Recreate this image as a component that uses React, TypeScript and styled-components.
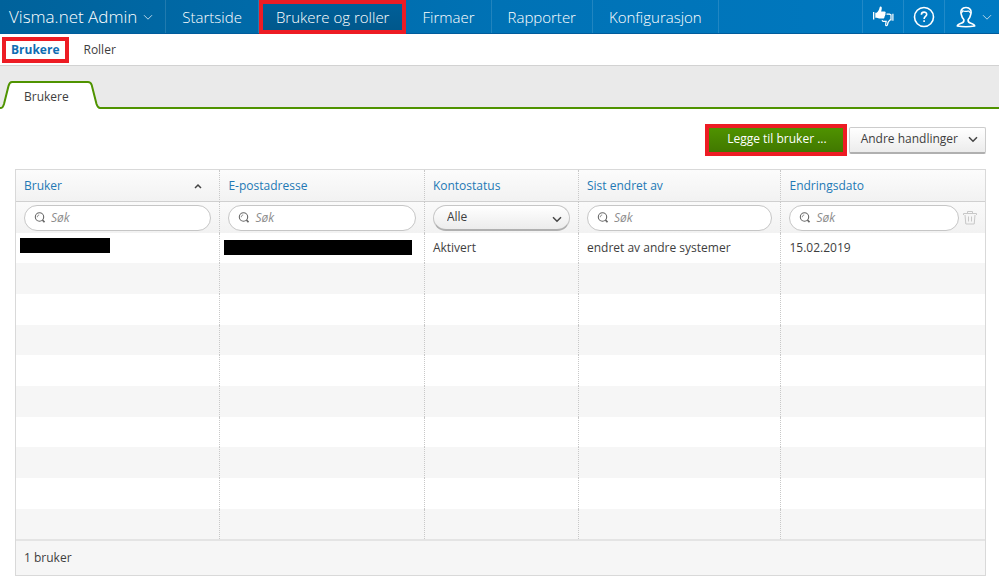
import React, { useState } from 'react';
import styled, { createGlobalStyle, css } from 'styled-components';

const GlobalStyle = createGlobalStyle`
  *, *::before, *::after { box-sizing: border-box; }
  body {
    margin: 0;
    background: #fff;
    color: #3e3e3e;
    font-family: 'Open Sans', 'Noto Sans', sans-serif;
    font-size: 12px;
    line-height: 18px;
  }
  button, input, select { font: inherit; color: inherit; }
`;

const HIGHLIGHT = '#ed1c24';

const TopBar = styled.header`
  display: flex;
  height: 34px;
  background: linear-gradient(to right, #00629b, #0072b5 50%, #007ac2);
  border-bottom: 1px solid #005c9c;
  color: #fff;
`;

const topItem = css`
  display: flex;
  align-items: center;
  height: 33px;
  border: 0;
  border-right: 1px solid rgba(255, 255, 255, 0.13);
  background: none;
  color: #fff;
  cursor: pointer;
`;

const Brand = styled.button`
  ${topItem}
  gap: 6px;
  padding: 0 12px 0 9px;
  font-size: 17px;
  font-weight: 300;
`;

const MainNav = styled.nav`
  display: flex;
  flex: 1;
`;

const NavLink = styled.a<{ $active?: boolean }>`
  ${topItem}
  padding: 0 16px;
  font-size: 15px;
  text-decoration: none;
  font-weight: 300;
  ${({ $active }) =>
    $active &&
    css`
      height: 34px;
      padding: 0 13px;
      background: linear-gradient(#005f99, #00588c);
      border: 4px solid ${HIGHLIGHT};
    `}
`;

const Tools = styled.div`
  display: flex;
`;

const ToolButton = styled.button<{ $menu?: boolean }>`
  ${topItem}
  gap: 6px;
  padding: ${({ $menu }) => ($menu ? '0 7px 0 11px' : '0 9px')};
  border-right: 0;
  border-left: 1px solid rgba(255, 255, 255, 0.13);
`;

const SubNav = styled.nav`
  display: flex;
  align-items: center;
  gap: 14px;
  height: 32px;
  padding: 0 2px;
  border-bottom: 1px solid #d2d2d2;
`;

const SubLink = styled.a<{ $active?: boolean }>`
  color: #3e3e3e;
  text-decoration: none;
  ${({ $active }) =>
    $active &&
    css`
      padding: 0 6px 0 5px;
      border: 4px solid ${HIGHLIGHT};
      color: #0f6db3;
      font-weight: 700;
    `}
`;

const TabStrip = styled.div`
  display: flex;
  align-items: flex-end;
  height: 43px;
  background: linear-gradient(#4f9300, #4f9300) bottom / 100% 2px no-repeat #eaeaea;
`;

const Tab = styled.button`
  display: grid;
  width: 100px;
  height: 28px;
  padding: 0;
  border: 0;
  background: none;
  cursor: pointer;
`;

const TabShape = styled.svg`
  grid-area: 1 / 1;
`;

const TabLabel = styled.span`
  grid-area: 1 / 1;
  padding: 7px 0 0 24px;
  text-align: left;
`;

const Content = styled.main`
  padding: 15px 13px 12px 15px;
`;

const Actions = styled.div`
  display: flex;
  align-items: center;
  justify-content: flex-end;
  gap: 2px;
  margin-bottom: 13px;
`;

const PrimaryButton = styled.button`
  height: 32px;
  padding: 0 16px 2px 18px;
  border: 4px solid ${HIGHLIGHT};
  background: linear-gradient(#4f9200, #417800);
  color: #fff;
  cursor: pointer;
`;

const MenuButton = styled.button`
  display: flex;
  align-items: center;
  gap: 10px;
  height: 27px;
  padding: 0 7px 1px 11px;
  border: 1px solid #ccc;
  border-bottom: 2px solid #b0b0b0;
  border-radius: 2px;
  background: linear-gradient(#fff, #ececec);
  cursor: pointer;
`;

const Panel = styled.section`
  border: 1px solid #d9d9d9;
`;

const Table = styled.table`
  width: 100%;
  table-layout: fixed;
  border-collapse: separate;
  border-spacing: 0;
  text-align: left;
`;

const Col = styled.col<{ $share: number }>`
  width: ${({ $share }) => $share}%;
`;

const divider = css`
  &:not(:last-child) { border-right: 1px dotted #c8c8c8; }
`;

const HeadCell = styled.th`
  ${divider}
  height: 32px;
  padding: 0 8px;
  border-bottom: 1px solid #d0d0d0;
  background: linear-gradient(#fcfcfc, #f2f2f2);
  color: #2379b5;
  font-weight: 400;
`;

const HeadContent = styled.div`
  display: flex;
  align-items: center;
  justify-content: space-between;
  padding-right: 8px;
`;

const FilterCell = styled.td`
  ${divider}
  height: 31px;
  padding: 0 8px;
  background: linear-gradient(#fafafa, #f2f2f2);
`;

const FilterLine = styled.div`
  display: flex;
  align-items: center;
  gap: 4px;
`;

const SearchBox = styled.label`
  display: flex;
  flex: 1;
  align-items: center;
  gap: 5px;
  min-width: 0;
  height: 26px;
  padding: 0 10px 0 9px;
  border: 1px solid #c6c6c6;
  border-radius: 13px;
  background: #fff;
`;

const SearchInput = styled.input`
  flex: 1;
  min-width: 0;
  padding: 0;
  border: 0;
  outline: 0;
  background: none;
  &::placeholder { color: #8c8c8c; font-style: italic; opacity: 1; }
`;

const SelectBox = styled.div`
  display: grid;
  flex: 1;
  align-items: center;
`;

const StatusSelect = styled.select`
  grid-area: 1 / 1;
  width: 100%;
  height: 26px;
  padding: 0 28px 1px 13px;
  appearance: none;
  border: 1px solid #c6c6c6;
  border-bottom: 2px solid #b0b0b0;
  border-radius: 13px;
  background: linear-gradient(#fff, #ececec);
`;

const SelectArrow = styled.span`
  display: flex;
  grid-area: 1 / 1;
  justify-self: end;
  padding: 2px 8px 0 0;
  pointer-events: none;
`;

const DeleteButton = styled.button`
  display: flex;
  padding: 0;
  border: 0;
  background: none;
  cursor: pointer;
`;

const Row = styled.tr`
  height: 31px;
  &:nth-child(3n + 1) { height: 30px; }
  &:nth-child(even) { background: #f6f6f6; }
`;

const Cell = styled.td<{ $tight?: boolean }>`
  ${divider}
  padding: 0 ${({ $tight }) => ($tight ? 4 : 8)}px;
`;

const Redacted = styled.div<{ $share: number; $low?: boolean }>`
  width: ${({ $share }) => $share}%;
  height: 15px;
  margin-bottom: ${({ $low }) => ($low ? 2 : 6)}px;
  background: #000;
`;

const Footer = styled.footer`
  padding: 8px;
  border-top: 2px solid #e4e4e4;
  background: #f6f6f6;
`;

const Chevron = ({ color = '#444', up = false, size = 10, weight = 1.5 }) => (
  <svg width={size} height={size} viewBox="0 0 10 10" fill="none" stroke={color} strokeWidth={weight} aria-hidden="true">
    <path d={up ? 'M2 7l3-3 3 3' : 'M1 3.2l4 4 4-4'} />
  </svg>
);

const ThumbsIcon = () => (
  <svg width="22" height="22" viewBox="0 0 22 22" aria-hidden="true">
    <path fill="#fff" d="M1 6h1.300v7.500H1zM3.300 6.800h1.300c1.700-1.300 2.500-2.800 3-5.300.2-1.500 2.200-1.300 2.200.5 0 1.300-.3 2.500-.7 3.500h3.400c1.300 0 1.600 1.300.8 1.800.5.500.4 1.400-.3 1.800.3.700 0 1.400-.6 1.600.2.900-.3 1.800-1.300 1.800H7.200c-1.300 0-1.800-.7-3.900-.7z" />
    <path fill="none" stroke="#fff" strokeWidth="1.200" d="M14.500 8.200h3l1.500.7v5h-1c-1.200.8-2.200 2.400-2.500 4.900-.1 1.200-1.800 1.300-1.800-.1 0-1.200.2-2.200.5-3.300h-2.800c-1 0-1.300-.7-1-1.400M20.900 7.800v7" />
  </svg>
);

const HelpIcon = () => (
  <svg width="22" height="22" viewBox="0 0 22 22" fill="none" stroke="#fff" strokeWidth="1.6" aria-hidden="true">
    <circle cx="11" cy="11" r="9.500" />
    <path d="M8.400 8.700c0-3.500 5.300-3.300 5.300-.3 0 1.900-2.600 2.100-2.600 4.500" />
    <path d="M11.100 14.200v1.900" />
  </svg>
);

const PersonIcon = () => (
  <svg width="20" height="22" viewBox="0 0 20 22" fill="none" stroke="#fff" strokeWidth="1.6" strokeLinejoin="round" aria-hidden="true">
    <path d="M7.800 13.500C6.300 12 5.700 10.500 5.300 8.500 4 4.500 6 1.500 10 1.500s6 3 4.700 7c-.4 2-1 3.500-2.500 5-.5 2.300.8 3.200 2.600 3.700 2 .6 3.500 1 3.900 2.800-5 .8-12.400.8-17.400 0 .4-1.800 1.900-2.200 3.900-2.800 1.800-.5 3.100-1.400 2.600-3.700z" />
    <path strokeWidth="1.200" d="M5.300 7.300c.8-.7 1-1.600 1.400-2.600 2 1.300 4.300.6 6 .3.800.5 1.200 1.300 1.900 2.300" />
  </svg>
);

const SearchIcon = () => (
  <svg width="12" height="12" viewBox="0 0 12 12" fill="none" stroke="#666" aria-hidden="true">
    <circle cx="5.500" cy="5" r="4.200" strokeWidth="1.100" />
    <path d="M3.300 5.200c0-1.300.7-2.100 1.900-2.200" strokeWidth=".8" />
    <path d="M8.500 8l2 2.300" strokeWidth="1.700" />
  </svg>
);

const TrashIcon = () => (
  <svg width="14" height="15" viewBox="0 0 14 15" fill="none" stroke="#c8c8c8" aria-hidden="true">
    <path d="M.5 5V3.500h13V5M4.500 3.500v-2h5v2M2 5l.8 9h8.400L12 5M5.500 6.500v5M8.500 6.500v5" />
  </svg>
);

const links = ['Startside', 'Brukere og roller', 'Firmaer', 'Rapporter', 'Konfigurasjon'];
const columns = [
  { title: 'Bruker', share: 21.1 },
  { title: 'E-postadresse', share: 21.1 },
  { title: 'Kontostatus', share: 15.9 },
  { title: 'Sist endret av', share: 20.9 },
  { title: 'Endringsdato', share: 21 },
];
const emptyRows = Array.from({ length: 9 }, (_, i) => i);

export default function App() {
  const [status, setStatus] = useState('Alle');
  return (
    <>
      <GlobalStyle />
      <TopBar>
        <Brand type="button">
          Visma.net Admin <Chevron color="#b9d6e8" weight={1} />
        </Brand>
        <MainNav>
          {links.map((text) => (
            <NavLink key={text} href="#" $active={text === 'Brukere og roller'}>{text}</NavLink>
          ))}
        </MainNav>
        <Tools>
          <ToolButton type="button" aria-label="Tilbakemelding"><ThumbsIcon /></ToolButton>
          <ToolButton type="button" aria-label="Hjelp"><HelpIcon /></ToolButton>
          <ToolButton type="button" aria-label="Min profil" $menu>
            <PersonIcon />
            <Chevron color="#b9d6e8" weight={1} />
          </ToolButton>
        </Tools>
      </TopBar>
      <SubNav>
        <SubLink href="#" $active>Brukere</SubLink>
        <SubLink href="#">Roller</SubLink>
      </SubNav>
      <TabStrip role="tablist">
        <Tab type="button" role="tab" aria-selected="true">
          <TabShape width="100" height="28" viewBox="0 0 100 28" aria-hidden="true">
            <path d="M0 27C2.500 27 3 26 4 23L8.500 5C9.300 2 10 1 12 1H88C90 1 91 2 91.700 4L96.500 23C97.500 26 98 27 100 27V28H0Z" fill="#fff" />
            <path d="M0 27C2.500 27 3 26 4 23L8.500 5C9.300 2 10 1 12 1H88C90 1 91 2 91.700 4L96.500 23C97.500 26 98 27 100 27" fill="none" stroke="#4f9300" strokeWidth="2" />
          </TabShape>
          <TabLabel>Brukere</TabLabel>
        </Tab>
      </TabStrip>
      <Content>
        <Actions>
          <PrimaryButton type="button">Legge til bruker ...</PrimaryButton>
          <MenuButton type="button">Andre handlinger <Chevron /></MenuButton>
        </Actions>
        <Panel>
          <Table>
            <colgroup>
              {columns.map((c) => <Col key={c.title} $share={c.share} />)}
            </colgroup>
            <thead>
              <tr>
                {columns.map((c, i) => (
                  <HeadCell key={c.title} scope="col">
                    <HeadContent>{c.title}{i === 0 && <Chevron up />}</HeadContent>
                  </HeadCell>
                ))}
              </tr>
              <tr>
                {columns.map((c) => (
                  <FilterCell key={c.title}>
                    <FilterLine>
                      {c.title === 'Kontostatus' ? (
                        <SelectBox>
                          <StatusSelect aria-label={c.title} value={status} onChange={(e) => setStatus(e.target.value)}>
                            <option>Alle</option>
                            <option>Aktivert</option>
                          </StatusSelect>
                          <SelectArrow><Chevron /></SelectArrow>
                        </SelectBox>
                      ) : (
                        <SearchBox>
                          <SearchIcon />
                          <SearchInput placeholder="Søk" aria-label={c.title} />
                        </SearchBox>
                      )}
                      {c.title === 'Endringsdato' && (
                        <DeleteButton type="button" aria-label="Tøm filtre"><TrashIcon /></DeleteButton>
                      )}
                    </FilterLine>
                  </FilterCell>
                ))}
              </tr>
            </thead>
            <tbody>
              <Row>
                <Cell $tight><Redacted $share={46} /></Cell>
                <Cell $tight><Redacted $share={96} $low /></Cell>
                <Cell>Aktivert</Cell>
                <Cell>endret av andre systemer</Cell>
                <Cell>15.02.2019</Cell>
              </Row>
              {emptyRows.map((n) => (
                <Row key={n}>
                  {columns.map((c) => <Cell key={c.title} />)}
                </Row>
              ))}
            </tbody>
          </Table>
          <Footer>1 bruker</Footer>
        </Panel>
      </Content>
    </>
  );
}
